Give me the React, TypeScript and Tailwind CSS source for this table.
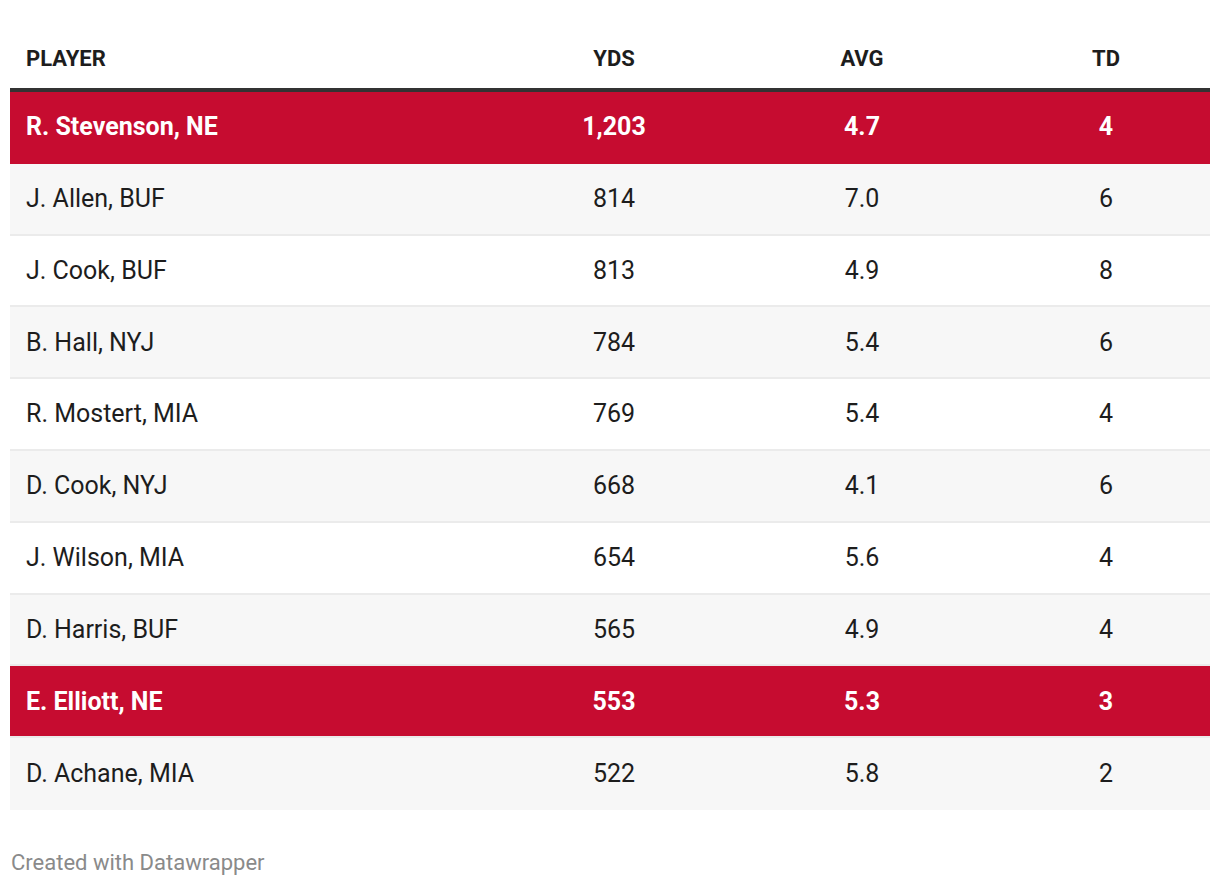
const rows = [
  { player: "R. Stevenson, NE", yds: "1,203", avg: "4.7", td: "4", hl: true },
  { player: "J. Allen, BUF", yds: "814", avg: "7.0", td: "6" },
  { player: "J. Cook, BUF", yds: "813", avg: "4.9", td: "8" },
  { player: "B. Hall, NYJ", yds: "784", avg: "5.4", td: "6" },
  { player: "R. Mostert, MIA", yds: "769", avg: "5.4", td: "4" },
  { player: "D. Cook, NYJ", yds: "668", avg: "4.1", td: "6" },
  { player: "J. Wilson, MIA", yds: "654", avg: "5.6", td: "4" },
  { player: "D. Harris, BUF", yds: "565", avg: "4.9", td: "4" },
  { player: "E. Elliott, NE", yds: "553", avg: "5.3", td: "3", hl: true },
  { player: "D. Achane, MIA", yds: "522", avg: "5.8", td: "2" },
];

const cols = "grid grid-cols-[480px_248px_248px_224px]";

export default function App() {
  return (
    <div className="w-[1220px] h-[886px] bg-white px-[10px] pt-[28px] font-['Roboto',sans-serif] text-[#1d1d1d]">
      <div className={`${cols} h-[64px] items-center border-b-[4px] border-[#333333] text-[22px] font-bold`}>
        <div className="pl-4">PLAYER</div>
        <div className="text-center">YDS</div>
        <div className="text-center">AVG</div>
        <div className="text-center pl-4">TD</div>
      </div>
      {rows.map((r, i) => (
        <div
          key={r.player}
          className={`${cols} h-[71.8px] items-center text-[25px] ${
            i === rows.length - 1 ? "" : "border-b-2"
          } ${
            r.hl
              ? `bg-[#c60c30] text-white font-bold ${i === 0 ? "border-[#c60c30]" : "border-[#ebebeb]"}`
              : `${i % 2 === 1 ? "bg-[#f7f7f7]" : "bg-white"} border-[#ebebeb]`
          }`}
        >
          <div className="pl-4">{r.player}</div>
          <div className="text-center">{r.yds}</div>
          <div className="text-center">{r.avg}</div>
          <div className="text-center pl-4">{r.td}</div>
        </div>
      ))}
      <div className="mt-[36px] pl-px text-[22px] text-[#8a8a8a]">Created with Datawrapper</div>
    </div>
  );
}
